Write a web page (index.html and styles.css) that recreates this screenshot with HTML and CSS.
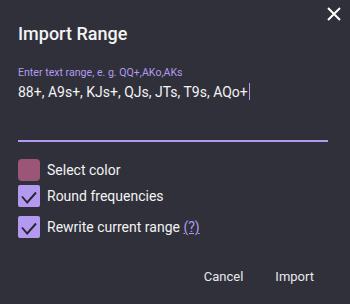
FILE: index.html
```html
<!DOCTYPE html>
<html>
    <head>
        <title>Import Range</title>
        <link rel="stylesheet" href="styles.css">
    </head>
    <body>
        <div class="dialog">
            <button class="closeBtn" aria-label="Close">
                <svg width="14" height="14" viewBox="0 0 14 14">
                    <path d="M1 1 L13 13 M13 1 L1 13" stroke="#ffffff" stroke-width="2" fill="none"/>
                </svg>
            </button>

            <h2 class="title">Import Range</h2>

            <div class="field">
                <div class="fieldLabel">Enter text range, e. g. QQ+,AKo,AKs</div>
                <div class="fieldInput">88+, A9s+, KJs+, QJs, JTs, T9s, AQo+<span class="caret"></span></div>
            </div>

            <div class="option colorOption">
                <span class="swatch"></span>
                <span>Select color</span>
            </div>
            <div class="option roundOption">
                <span class="check">
                    <svg width="22" height="22" viewBox="0 0 22 22">
                        <polyline points="4,11.5 9.2,17.5 18,7.5" stroke="#26262e" stroke-width="1.9" fill="none"/>
                    </svg>
                </span>
                <span>Round frequencies</span>
            </div>
            <div class="option rewriteOption">
                <span class="check">
                    <svg width="22" height="22" viewBox="0 0 22 22">
                        <polyline points="4,11.5 9.2,17.5 18,7.5" stroke="#26262e" stroke-width="1.9" fill="none"/>
                    </svg>
                </span>
                <span>Rewrite current range <a class="help" href="#">(?)</a></span>
            </div>

            <div class="actions">
                <button class="textBtn">Cancel</button>
                <button class="textBtn">Import</button>
            </div>
        </div>
    </body>
</html>
```

FILE: styles.css
```css
html, body{
    margin:0;
    padding:0;
    background-color:#2f3039;
}
body{
    width:350px;
    height:304px;
    font-family:Roboto, "Noto Sans", sans-serif;
    color:#f3f3f5;
}
.dialog{
    position:relative;
    padding:24px 22px 0 18px;
}
.closeBtn{
    position:absolute;
    top:7px;
    right:9px;
    padding:0;
    border:none;
    background:none;
    line-height:0;
}
.title{
    margin:0;
    font-size:18px;
    font-weight:500;
    line-height:20px;
}
.field{
    margin-top:22px;
}
.fieldLabel{
    font-size:10.6px;
    line-height:13px;
    color:#b39af0;
}
.fieldInput{
    margin-top:3px;
    height:58px;
    font-size:14px;
    line-height:20px;
    border-bottom:2px solid #b39af0;
}
.caret{
    display:inline-block;
    width:1px;
    height:17px;
    margin-left:1px;
    vertical-align:-3px;
    background-color:#b39af0;
}
.option{
    display:flex;
    align-items:center;
    gap:7px;
    font-size:14px;
    line-height:22px;
}
.colorOption{
    margin-top:17px;
}
.roundOption{
    margin-top:4px;
}
.rewriteOption{
    margin-top:9px;
}
.swatch{
    width:22px;
    height:22px;
    border-radius:4px;
    background-color:#9b5577;
}
.check{
    width:22px;
    height:22px;
    border-radius:2px;
    background-color:#b39af0;
    line-height:0;
}
.help{
    color:#b39af0;
    text-decoration:underline;
}
.actions{
    display:flex;
    justify-content:flex-end;
    gap:16px;
    margin-top:29px;
    margin-right:6px;
}
.textBtn{
    padding:2px 8px;
    border:none;
    background:none;
    color:#e8e8ec;
    font-family:Roboto, "Noto Sans", sans-serif;
    font-size:13px;
    line-height:16px;
}
```
